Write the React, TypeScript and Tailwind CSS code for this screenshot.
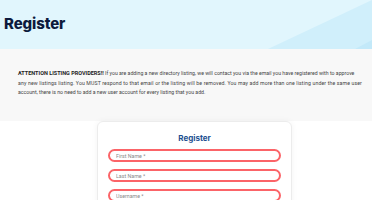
import type { JSX } from 'react'

const FIELDS = ['First Name *', 'Last Name *', 'Username *', 'Email *']

function Field({ label }: { label: string }): JSX.Element {
  return (
    <input
      placeholder={label}
      className="block w-full h-[13px] rounded-full border-2 border-[#fb6468] bg-white px-[6px] text-[5.3px] text-[#555] placeholder:text-[#8a8a8a] outline-none"
    />
  )
}

export default function App() {
  return (
    <div className="min-h-screen bg-white" style={{ fontFamily: 'Roboto, "Liberation Sans", sans-serif' }}>
      {/* Page title band */}
      <header className="relative h-[49px] overflow-hidden bg-[#e1f6fd] px-[4px] flex items-center">
        <svg className="absolute inset-0 h-full w-full" viewBox="0 0 372 49" preserveAspectRatio="none">
          <polygon points="268,49 372,0 372,49" fill="#d0effb" />
          <polygon points="355,49 372,40 372,49" fill="#c3e9f9" />
        </svg>
        <h1
          className="relative text-[15px] font-extrabold tracking-[-0.1px] text-[#0c1a3c]"
          style={{ fontFamily: 'Inter, "Open Sans", sans-serif' }}
        >
          Register
        </h1>
      </header>

      {/* Notice */}
      <section className="h-[72px] bg-[#f8f8f8] px-[18px] pt-[20px]">
        <p className="whitespace-nowrap text-[5.2px] leading-[9.6px] text-[#444]">
          <strong className="text-[5.5px] font-bold text-[#222]">ATTENTION LISTING PROVIDERS!!</strong> If you are
          adding a new directory listing, we will contact you via the email you have registered with to approve
          <br />
          <span className="tracking-[0.12px]">
            any new listings listing. You MUST respond to that email or the listing will be removed. You may add more
            than one listing under the same user
          </span>
          <br />
          account, there is no need to add a new user account for every listing that you add.
        </p>
      </section>

      {/* Form */}
      <section className="bg-white pb-6">
        <div className="ml-[97px] w-[195px] rounded-[6px] border border-[#ececec] shadow-[0_0_6px_rgba(0,0,0,0.05)] px-[10px] pt-[10px] pb-4">
          <h2 className="text-center text-[8px] font-bold text-[#1d4f91]" style={{ fontFamily: 'Inter, Roboto, sans-serif' }}>
            Register
          </h2>
          <div className="mt-[5px] flex flex-col gap-[7px]">
            {FIELDS.map((f) => (
              <Field key={f} label={f} />
            ))}
          </div>
        </div>
      </section>
    </div>
  )
}
